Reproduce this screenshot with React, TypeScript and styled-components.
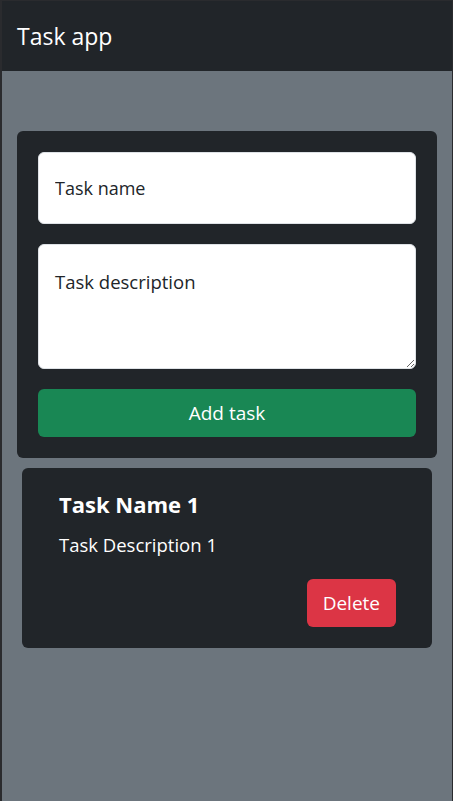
import styled, { createGlobalStyle } from 'styled-components';

const GlobalStyle = createGlobalStyle`
  html, body {
    margin: 0;
    padding: 0;
    height: 100%;
  }
  body {
    background: #6c757d;
    font-family: 'Open Sans', 'Noto Sans', sans-serif;
    color: #212529;
    box-sizing: border-box;
    border-left: 2px solid #2a2b2e;
    border-right: 1px solid #2a2b2e;
    border-top: 1px solid #2a2b2e;
  }
  *, *::before, *::after {
    box-sizing: border-box;
  }
`;

const Navbar = styled.nav`
  height: 70px;
  background: #212529;
  display: flex;
  align-items: center;
  padding: 0 15px;
`;

const Brand = styled.span`
  color: #fff;
  font-size: 23px;
  line-height: 1;
`;

const Main = styled.main`
  padding: 60px 15px 0 15px;
  display: flex;
  flex-direction: column;
  gap: 10px;
`;

const FormCard = styled.form`
  background: #212529;
  border-radius: 6px;
  padding: 21px;
  display: flex;
  flex-direction: column;
  gap: 20px;
`;

const Field = styled.input`
  height: 72px;
  border: 1px solid #dee2e6;
  border-radius: 6px;
  background: #fff;
  padding: 0 16px;
  font: inherit;
  font-size: 18px;
  color: #212529;
  &::placeholder {
    color: #212529;
  }
`;

const Area = styled.textarea`
  height: 125px;
  border: 1px solid #dee2e6;
  border-radius: 6px;
  background: #fff;
  padding: 24px 16px;
  font: inherit;
  font-size: 18.5px;
  line-height: 26px;
  color: #212529;
  resize: vertical;
  &::placeholder {
    color: #212529;
  }
`;

const Button = styled.button<{ $variant: 'success' | 'danger' }>`
  height: 48px;
  border: none;
  border-radius: 6px;
  background: ${(p) => (p.$variant === 'success' ? '#198754' : '#dc3545')};
  color: #fff;
  font: inherit;
  font-size: 19px;
  padding: 0 16px;
  cursor: pointer;
`;

const TaskCard = styled.div`
  margin: 0 5px;
  background: #212529;
  border-radius: 6px;
  padding: 21px 36px 21px 37px;
  display: flex;
  flex-direction: column;
  color: #fff;
`;

const TaskTitle = styled.h3`
  margin: 0;
  font-size: 22px;
  font-weight: 700;
  line-height: 30px;
`;

const TaskText = styled.p`
  margin: 13px 0 0 0;
  font-size: 18.5px;
  line-height: 26px;
`;

const Actions = styled.div`
  display: flex;
  justify-content: flex-end;
  margin-top: 21px;
`;

const tasks = [{ name: 'Task Name 1', description: 'Task Description 1' }];

export default function App() {
  return (
    <>
      <GlobalStyle />
      <Navbar>
        <Brand>Task app</Brand>
      </Navbar>
      <Main>
        <FormCard onSubmit={(e) => e.preventDefault()}>
          <Field placeholder='Task name' />
          <Area placeholder='Task description' />
          <Button $variant='success' type='submit'>
            Add task
          </Button>
        </FormCard>
        {tasks.map((task) => (
          <TaskCard key={task.name}>
            <TaskTitle>{task.name}</TaskTitle>
            <TaskText>{task.description}</TaskText>
            <Actions>
              <Button $variant='danger' type='button'>
                Delete
              </Button>
            </Actions>
          </TaskCard>
        ))}
      </Main>
    </>
  );
}
